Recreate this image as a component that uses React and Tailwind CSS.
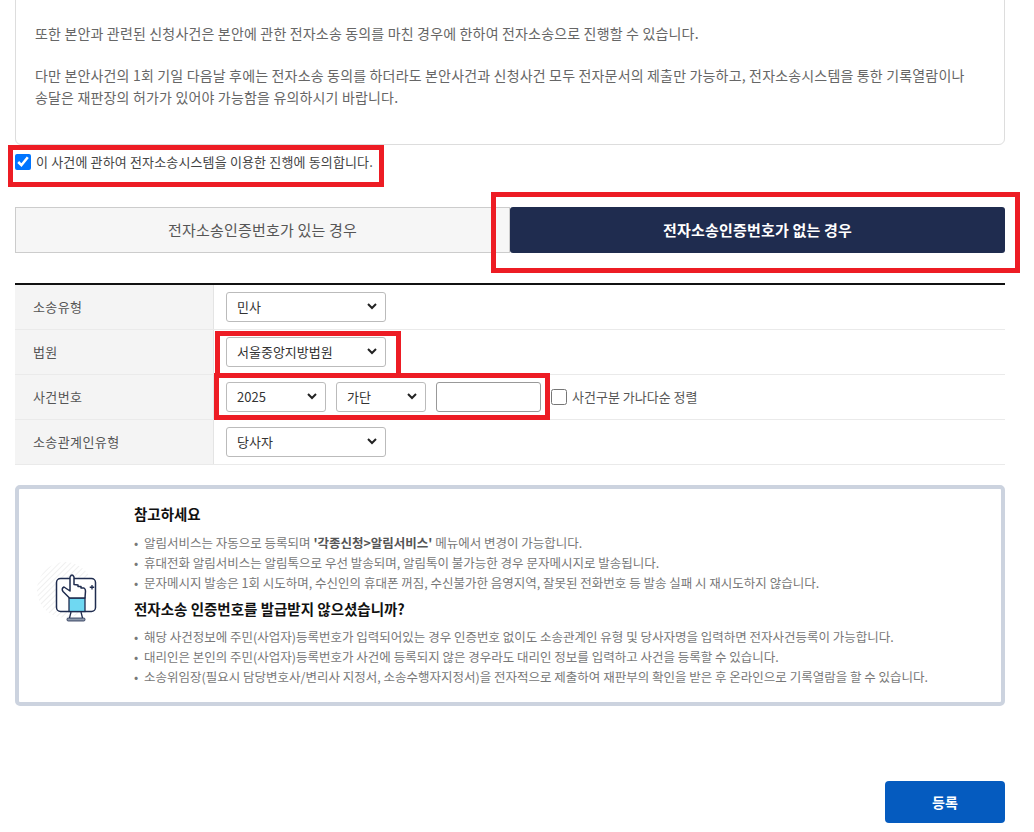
import React from "react";

const FONT = { fontFamily: '"Noto Sans CJK KR", "Noto Sans", sans-serif' };

const Chevron = () => (
  <svg
    width="10"
    height="7"
    viewBox="0 0 10 7"
    className="absolute right-[9px] top-[11px] pointer-events-none"
  >
    <path d="M1 1 L5 5 L9 1" fill="none" stroke="#222" strokeWidth="2" />
  </svg>
);

const SelectBox = ({ value, options, width }) => (
  <div className={`relative ${width}`}>
    <select
      defaultValue={value}
      className="w-full h-[30px] appearance-none bg-white border border-[#bbbbbb] rounded-[3px] pl-[10px] text-[13px] text-[#333] outline-none"
    >
      {options.map((o) => (
        <option key={o}>{o}</option>
      ))}
    </select>
    <Chevron />
  </div>
);

const Row = ({ label, children }) => (
  <div className="flex h-[45px] border-b border-[#eaeaea]">
    <div className="w-[199px] shrink-0 bg-[#f4f4f4] border-r border-[#e4e4e4] pl-[18px] flex items-center text-[13px] tracking-[0.4px] text-[#555]">
      {label}
    </div>
    <div className="flex-1 pl-[12px] flex items-center gap-[10px]">{children}</div>
  </div>
);

const RedBox = ({ className }) => (
  <div className={`absolute border-[5px] border-[#ed1c24] pointer-events-none ${className}`} />
);

const NoteIcon = () => (
  <svg width="64" height="64" viewBox="0 0 64 64" className="shrink-0">
    <defs>
      <pattern id="hatch" width="4" height="4" patternUnits="userSpaceOnUse" patternTransform="rotate(45)">
        <line x1="0" y1="0" x2="0" y2="4" stroke="#e2e2e2" strokeWidth="1" />
      </pattern>
    </defs>
    <circle cx="28" cy="28" r="28" fill="url(#hatch)" />
    <rect x="19.500" y="16.500" width="39" height="33" rx="4" fill="#fff" stroke="#1f2c4f" strokeWidth="1.500" />
    <rect x="32" y="36" width="16" height="13.500" fill="#6fd8f2" stroke="#1f2c4f" strokeWidth="1.300" />
    <path
      d="M32.500 36 L26 29.500 Q24 26.500 27 25 L33 29 L33 15 Q35 11 37 15 L37 22.500 L41 23 L41 24.500 L44 24.500 L44 26 L47 26 Q48.500 27 48.500 29 L48 36 Z"
      fill="#fff"
      stroke="#1f2c4f"
      strokeWidth="1.500"
      strokeLinejoin="round"
    />
    <path d="M55 23 v4.500 M52.750 25.250 h4.500" stroke="#1f2c4f" strokeWidth="1.300" />
    <path d="M34 50 L32.500 56 M44 50 L45.500 56" stroke="#1f2c4f" strokeWidth="1.300" />
    <rect x="30" y="56" width="18" height="3" rx="1.200" fill="#8d99ab" stroke="#1f2c4f" strokeWidth="0.800" />
  </svg>
);

const Notes = ({ items, className = "" }) => (
  <ul className={className}>
    {items.map((item, i) => (
      <li key={i} className="flex h-[20px] items-center text-[12.500px] text-[#777]">
        <span className="w-[10px] shrink-0 text-[#777]">•</span>
        <span>{item}</span>
      </li>
    ))}
  </ul>
);

export default function App() {
  return (
    <div style={FONT} className="relative h-[832px] overflow-hidden bg-white pl-[15px] pr-[29px]">
      {/* 동의 안내 */}
      <div className="-mt-[40px] border border-[#dddddd] rounded-[6px] pt-[19px] pb-[36px] pl-[19px] pr-[30px] text-[14px] tracking-[0.17px] leading-[22px] text-[#666] space-y-[20px]">
        <p>전자소송 동의 후에는 전자문서로 제출하여야 합니다.</p>
        <p>또한 본안과 관련된 신청사건은 본안에 관한 전자소송 동의를 마친 경우에 한하여 전자소송으로 진행할 수 있습니다.</p>
        <p>
          다만 본안사건의 1회 기일 다음날 후에는 전자소송 동의를 하더라도 본안사건과 신청사건 모두 전자문서의 제출만 가능하고, 전자소송시스템을 통한 기록열람이나 송달은 재판장의 허가가 있어야 가능함을 유의하시기 바랍니다.
        </p>
      </div>

      <label className="mt-[9px] flex items-center h-[16px] text-[13px] tracking-[0.15px] text-[#444]">
        <input type="checkbox" defaultChecked className="w-4 h-4 m-0" />
        <span className="ml-[5px]">이 사건에 관하여 전자소송시스템을 이용한 진행에 동의합니다.</span>
      </label>

      {/* 탭 */}
      <div className="mt-[37px] grid grid-cols-2 h-[46px]">
        <button className="bg-[#f6f6f6] border border-[#cccccc] text-[15px] tracking-[0.2px] text-[#555]">
          전자소송인증번호가 있는 경우
        </button>
        <button className="bg-[#1f2c4f] rounded-[3px] text-[15px] tracking-[0.2px] font-bold text-white">
          전자소송인증번호가 없는 경우
        </button>
      </div>

      {/* 입력 폼 */}
      <div className="mt-[30px] border-t-2 border-[#111]">
        <Row label="소송유형">
          <SelectBox value="민사" options={["민사"]} width="w-[160px]" />
        </Row>
        <Row label="법원">
          <SelectBox value="서울중앙지방법원" options={["서울중앙지방법원"]} width="w-[160px]" />
        </Row>
        <Row label="사건번호">
          <SelectBox value="2025" options={["2025"]} width="w-[100px]" />
          <SelectBox value="가단" options={["가단"]} width="w-[90px]" />
          <input type="text" className="w-[105px] h-[30px] border border-[#999] rounded-[3px] outline-none" />
          <label className="flex items-center text-[13px] text-[#555]">
            <input type="checkbox" className="w-4 h-4 m-0" />
            <span className="ml-[5px]">사건구분 가나다순 정렬</span>
          </label>
        </Row>
        <Row label="소송관계인유형">
          <SelectBox value="당사자" options={["당사자"]} width="w-[160px]" />
        </Row>
      </div>

      {/* 참고 */}
      <div className="mt-[20px] h-[221px] border-4 border-[#ccd3df] rounded-[5px] flex items-center pl-[18px]">
        <div className="mb-[4px]">
          <NoteIcon />
        </div>
        <div className="ml-[33px]">
          <h3 className="text-[14.500px] font-bold leading-[20px] text-[#111]">참고하세요</h3>
          <Notes
            className="mt-[10px]"
            items={[
              <>
                알림서비스는 자동으로 등록되며 <b className="text-[#555]">'각종신청&gt;알림서비스'</b> 메뉴에서 변경이 가능합니다.
              </>,
              "휴대전화 알림서비스는 알림톡으로 우선 발송되며, 알림톡이 불가능한 경우 문자메시지로 발송됩니다.",
              "문자메시지 발송은 1회 시도하며, 수신인의 휴대폰 꺼짐, 수신불가한 음영지역, 잘못된 전화번호 등 발송 실패 시 재시도하지 않습니다.",
            ]}
          />
          <h3 className="mt-[5px] text-[14.500px] font-bold leading-[20px] text-[#111]">전자소송 인증번호를 발급받지 않으셨습니까?</h3>
          <Notes
            className="mt-[9px]"
            items={[
              "해당 사건정보에 주민(사업자)등록번호가 입력되어있는 경우 인증번호 없이도 소송관계인 유형 및 당사자명을 입력하면 전자사건등록이 가능합니다.",
              "대리인은 본인의 주민(사업자)등록번호가 사건에 등록되지 않은 경우라도 대리인 정보를 입력하고 사건을 등록할 수 있습니다.",
              "소송위임장(필요시 담당변호사/변리사 지정서, 소송수행자지정서)을 전자적으로 제출하여 재판부의 확인을 받은 후 온라인으로 기록열람을 할 수 있습니다.",
            ]}
          />
        </div>
      </div>

      <div className="mt-[75px] flex justify-end">
        <button className="w-[120px] h-[42px] bg-[#055bbf] rounded-[4px] text-[14px] font-bold text-white">등록</button>
      </div>

      {/* 빨간 표시 */}
      <RedBox className="left-[8px] top-[145px] w-[376px] h-[42px]" />
      <RedBox className="left-[491px] top-[192px] w-[529px] h-[81px]" />
      <RedBox className="left-[215px] top-[331px] w-[186px] h-[47px]" />
      <RedBox className="left-[214px] top-[373px] w-[336px] h-[47px]" />
    </div>
  );
}
